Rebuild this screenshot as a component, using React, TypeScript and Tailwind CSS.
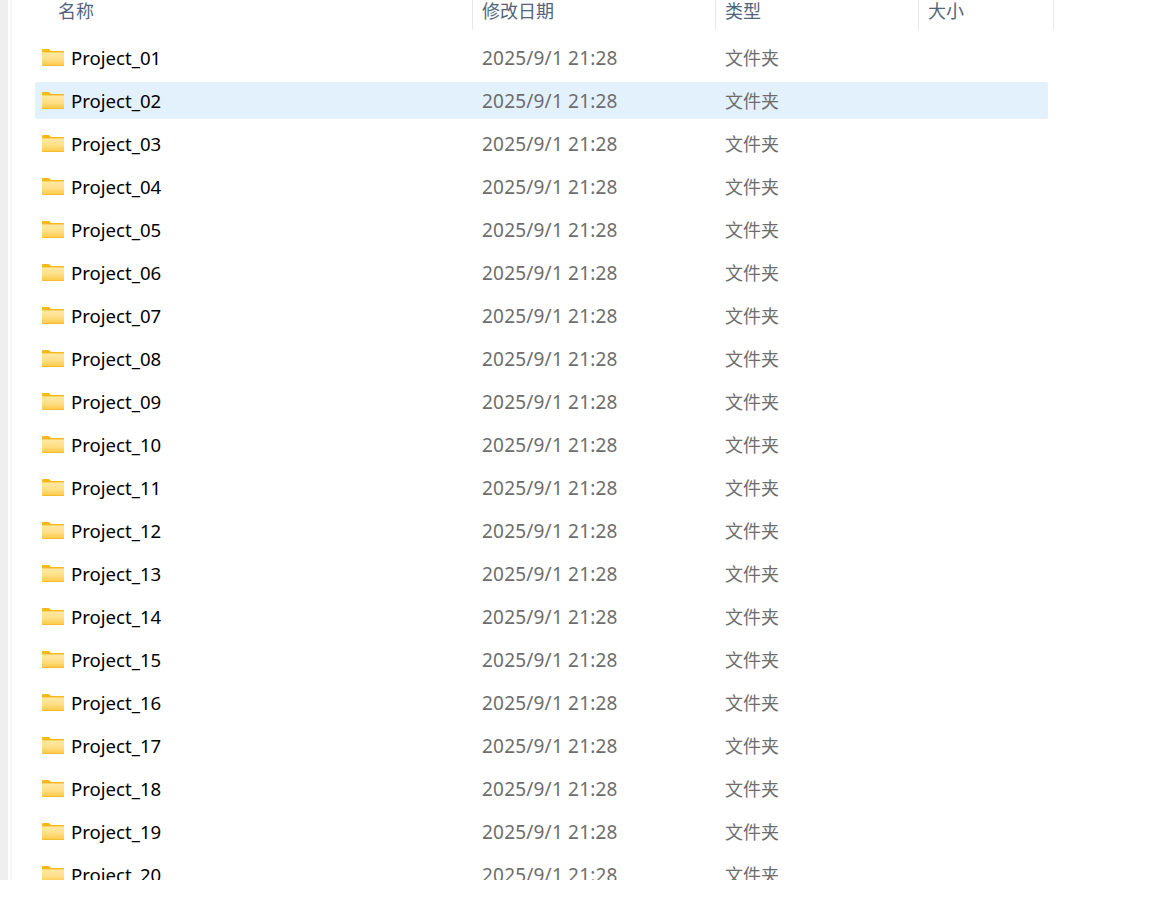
const projects = Array.from({ length: 20 }, (_, i) => "Project_" + String(i + 1).padStart(2, "0"));

const FolderIcon = () => (
	<svg width="22" height="17" viewBox="0 0 22 17" className="shrink-0">
		<defs>
			<linearGradient id="folder-body" x1="0" y1="0" x2="0" y2="1">
				<stop offset="0" stopColor="#ffe9a6" />
				<stop offset="0.55" stopColor="#ffdf87" />
				<stop offset="1" stopColor="#fdcb4c" />
			</linearGradient>
		</defs>
		<path d="M0 1C0 .4.4 0 1 0h5.5c.4 0 .7.1.9.4L9 2h12c.6 0 1 .4 1 1v3H0z" fill="#f8b71a" />
		<path d="M0 3h21c.6 0 1 .4 1 1v12c0 .6-.4 1-1 1H1c-.6 0-1-.4-1-1z" fill="#f6bb30" />
		<path d="M0 3.5h21c.6 0 1 .4 1 1V16H0z" fill="url(#folder-body)" />
	</svg>
);

const Header = ({ label, width }: { label: string; width: string }) => (
	<div className={`${width} h-[30px] border-r border-[#e8e8e8] pl-[9px] pt-[2px] text-[#52647c] leading-[18px]`}>{label}</div>
);

const App = () => {
	return (
		<div className="[font-family:'Noto_Sans','Noto_Sans_CJK_SC',sans-serif] h-[903px] bg-white text-[18px]">
			<div className="h-[880px] overflow-hidden flex">
				<div className="w-[8px] bg-[#efefef]"></div>
				<div className="w-[2px] bg-white"></div>
				<div className="w-[2px] bg-[#f6f6f6]"></div>
				<div className="flex-1 pl-[23px]">
					<div className="flex">
						<div className="w-[438px] h-[30px] border-r border-[#e8e8e8] pl-[23px] pt-[2px] text-[#52647c] leading-[18px]">名称</div>
						<Header label="修改日期" width="w-[243px]" />
						<Header label="类型" width="w-[203px]" />
						<Header label="大小" width="w-[135px]" />
					</div>
					<div className="flex flex-col gap-[6px] pt-[9px]">
						{projects.map((name, i) => (
							<div key={name} className={`flex items-center w-[1013px] h-[37px] shrink-0 rounded-[2px] pt-[2px] ${i === 1 ? "bg-[#e3f1fd]" : ""}`}>
								<div className="w-[447px] -mt-[2px] flex items-center gap-[7px] pl-[7px] text-black text-[18.6px]">
									<FolderIcon />
									<span>{name}</span>
								</div>
								<div className="w-[243px] text-[#6d6d6d] text-[19px] tracking-[0.2px]">2025/9/1 21:28</div>
								<div className="text-[#6d6d6d]">文件夹</div>
							</div>
						))}
					</div>
				</div>
			</div>
		</div>
	);
};

export default App;
